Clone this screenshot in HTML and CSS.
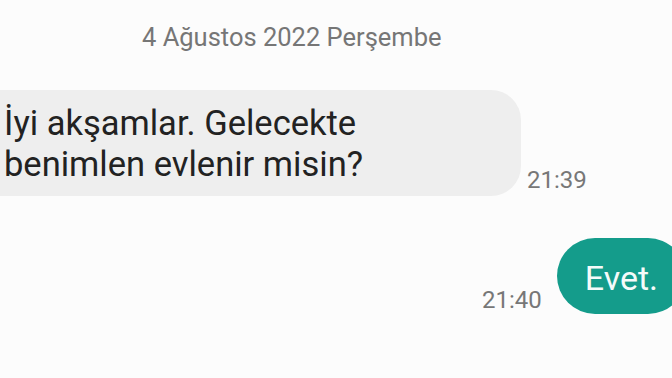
FILE: index.html
```html
<!DOCTYPE html>
<html>
  <head>
    <title>Mesajlar</title>
    <link rel="stylesheet" href="styles.css">
  </head>
  <body>
    <div class="chat">
      <div class="date">4 Ağustos 2022 Perşembe</div>

      <div class="row incoming">
        <div class="bubble">İyi akşamlar. Gelecekte<br>benimlen evlenir misin?</div>
        <span class="time">21:39</span>
      </div>

      <div class="row outgoing">
        <span class="time">21:40</span>
        <div class="bubble">Evet.</div>
      </div>
    </div>
  </body>
</html>
```

FILE: styles.css
```css
body {
  margin: 0;
  padding: 0;
  background-color: #fcfcfc;
  font-family: Roboto, "Noto Sans", sans-serif;
  overflow: hidden;
}

.chat {
  display: flex;
  flex-direction: column;
}

.date {
  padding: 22px 0 0 142px;
  font-size: 25.5px;
  line-height: 30px;
  color: #767676;
}

.row {
  display: flex;
  align-items: flex-end;
}

.time {
  font-size: 24px;
  line-height: 28px;
  color: #777;
}

.incoming {
  margin-top: 38px;
  gap: 6px;
}

.incoming .bubble {
  box-sizing: border-box;
  width: 551px;
  margin-left: -30px;
  padding: 13px 20px 11px 34px;
  background-color: #eeeeee;
  border-radius: 30px;
  font-size: 34.5px;
  line-height: 41px;
  color: #222;
}

.incoming .time {
  margin-bottom: 2px;
}

.outgoing {
  justify-content: flex-end;
  margin-top: 42px;
  gap: 15px;
}

.outgoing .bubble {
  margin-right: -14px;
  padding: 20px 28px 16px 28px;
  background-color: #149c8b;
  border-radius: 38px;
  font-size: 34px;
  line-height: 40px;
  color: #f4fbfa;
}

.outgoing .time {
  margin-bottom: 0;
}
```
